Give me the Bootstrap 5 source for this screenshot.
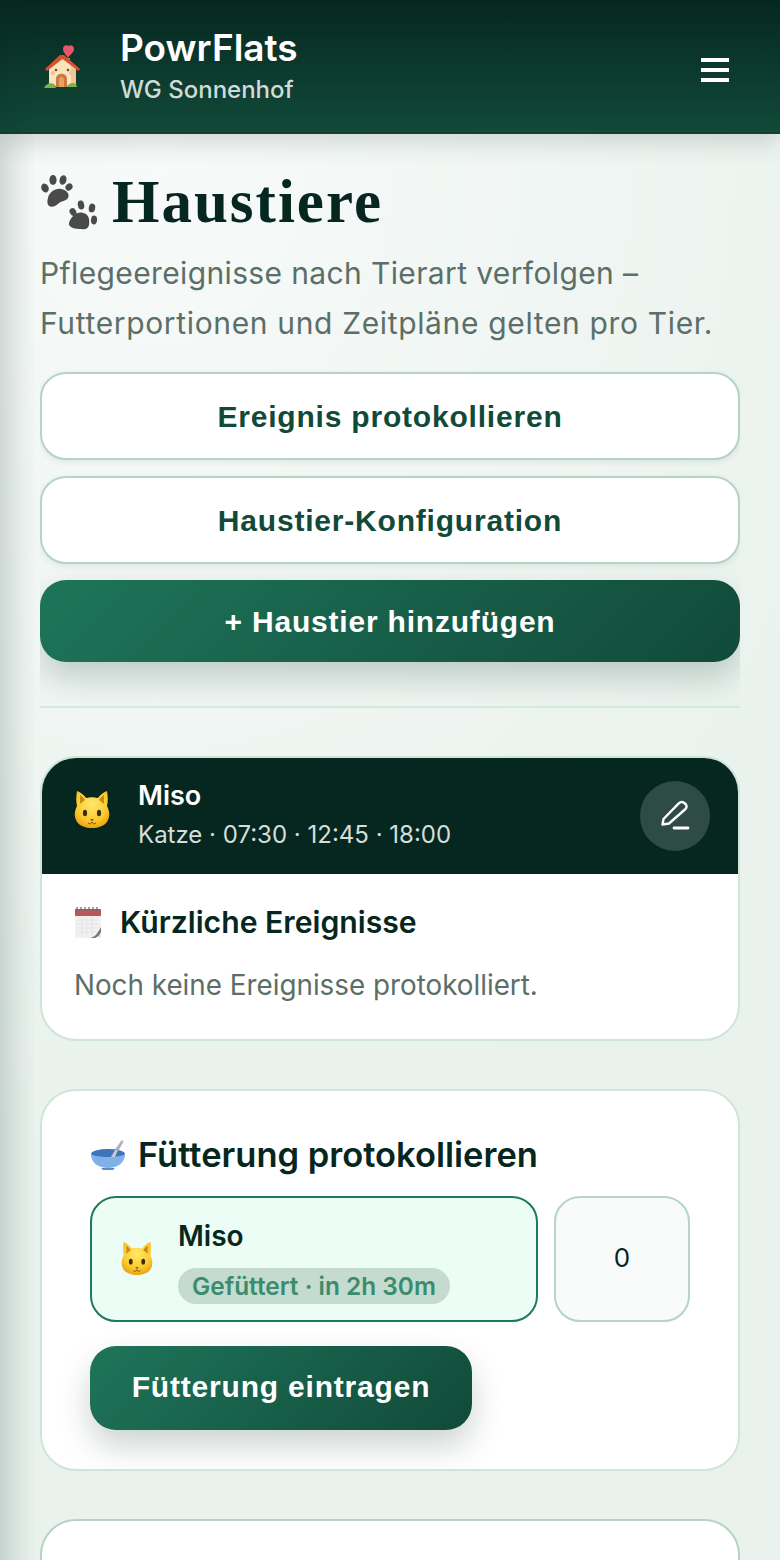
<!DOCTYPE html>
<html lang="de">
<head>
  <meta charset="UTF-8">
  <title>Haustiere</title>
  <link href="https://cdn.jsdelivr.net/npm/bootstrap@5.3.0/dist/css/bootstrap.min.css" rel="stylesheet">
  <style>
    html, body { height: 1560px; overflow: hidden; }
    body {
      font-family: "Inter", "Noto Sans", sans-serif;
      color: #062720;
      background: radial-gradient(ellipse 800px 1000px at 20% 10%, #f7faf9, #e9f2ed);
    }
    .edge-shade {
      position: fixed; top: 0; left: 0; width: 36px; height: 1560px; pointer-events: none;
      background: linear-gradient(90deg, rgba(6,39,32,.15), rgba(6,39,32,.05) 55%, rgba(6,39,32,0));
    }
    .app-head {
      height: 134px; padding: 0 51px 0 44px;
      background: linear-gradient(180deg, #062720, #114a39);
      border-bottom: 2px solid #1d3a33;
      box-shadow: 0 8px 24px rgba(6,39,32,.16);
      position: relative;
    }
    .brand-icon { width: 37px; height: 46px; margin-right: 39px; margin-top: 2px; }
    .brand-name { font-size: 37px; font-weight: 600; line-height: 44px; color: #fff; }
    .brand-sub { font-size: 24px; font-weight: 500; line-height: 32px; margin-top: 4px; color: rgba(255,255,255,.82); }
    .burger { width: 28px; margin-top: 8px; }
    .burger span { display: block; height: 4px; background: #fff; margin-bottom: 6px; }
    .burger span:last-child { margin-bottom: 0; }
    .page-wrap { padding: 0 40px; }
    .page-title {
      font-family: "Liberation Serif", serif; font-weight: 700; font-size: 61px; line-height: 70px;
      letter-spacing: 2px; color: #062720; margin: 33px 0 0;
    }
    .paw-icon { margin-right: 12px; }
    .page-lead { font-size: 30px; letter-spacing: .37px; line-height: 50px; color: #5b6f68; margin: 11px 0 0; }
    .lead-second { letter-spacing: .65px; }
    .action-box { overflow: hidden; padding: 24px 0 44px; }
    .btn-soft, .btn-fill {
      font-family: "Liberation Sans", sans-serif; font-weight: 700; font-size: 30px; letter-spacing: .8px;
      border-radius: 26px;
    }
    .btn-soft {
      height: 88px; background: #fff; color: #114a39; border: 2px solid #b5d4c6;
      box-shadow: 0 2px 6px rgba(6,39,32,.08);
    }
    .btn-fill {
      background: linear-gradient(135deg, #1e7559, #114a39); color: #fff; border: 0;
      box-shadow: 0 16px 32px rgba(6,39,32,.2);
    }
    .btn-fill:hover { color: #fff; }
    .btn-tall { height: 82px; }
    .btn-entry { height: 84px; width: 382px; padding-bottom: 9px; }
    .rule-line { height: 2px; background: #d3e8de; }
    .pet-card { border: 2px solid #cfe5da; border-radius: 36px; overflow: hidden; background: #fff; }
    .pet-head { background: #062720; height: 116px; padding: 0 28px 0 32px; border-radius: 0; border: 0; }
    .pet-emoji { width: 36px; height: 40px; margin: -12px 28px 0 0; }
    .pet-name { font-size: 27px; font-weight: 600; line-height: 36px; color: #fff; }
    .pet-times { font-size: 24px; line-height: 38px; margin-top: 2px; color: #d5dedb; }
    .edit-round {
      width: 70px; height: 70px; border-radius: 50%; border: 0; padding: 0;
      background: rgba(255,255,255,.17);
    }
    .events-body { padding: 30px 32px 0; height: 165px; }
    .events-title { font-size: 30.2px; font-weight: 600; line-height: 36px; margin: 0; }
    .cal-icon { width: 28px; height: 32px; margin-right: 18px; }
    .events-note { font-size: 27.8px; line-height: 36px; color: #5b6f68; margin: 27px 0 0; }
    .feed-card { margin-top: 48px; height: 382px; padding: 42px 48px 0; }
    .feed-title { font-size: 34.5px; font-weight: 600; line-height: 44px; margin: 0 0 19px; }
    .bowl-icon { width: 36px; height: 32px; margin-right: 12px; }
    .feed-pet {
      height: 126px; width: 448px; border: 2px solid #1f7a5c; border-radius: 26px; background: #ecfdf6;
      padding: 0 28px;
    }
    .feed-emoji { width: 32px; height: 36px; margin: 0 25px 0 1px; }
    .feed-info { margin-top: 6px; }
    .feed-name { font-size: 28px; font-weight: 600; line-height: 36px; margin-top: -2px; }
    .feed-tag {
      background: #c5dbd0; color: #3a8c6e; font-size: 24.4px; font-weight: 600; line-height: 36px;
      border-radius: 18px; padding: 0 14px; margin-top: 14px; display: inline-block;
    }
    .feed-count.form-control {
      width: 136px; height: 126px; border: 2px solid #b5d4c6; border-radius: 26px; background: #f9fbfa;
      font-size: 26px; text-align: center; color: #062720; box-shadow: none; padding-bottom: 10px;
    }
    .next-card { margin-top: 48px; height: 200px; border-color: #b5d4c6; }
  </style>
</head>
<body>
  <header class="app-head d-flex align-items-center">
    <svg class="brand-icon" viewBox="0 0 37 46" aria-hidden="true">
      <path d="M25 2c-3-2-6 0-6 3 0 4 4 6 5 9 1-3 6-5 6-9 0-3-3-5-5-3z" fill="#e9566a"/>
      <rect x="22" y="14" width="4" height="9" fill="#c9794f"/>
      <path d="M5 24 18 12l13 12v18H5z" fill="#fbe3bd"/>
      <path d="M27 20l5 4v18h-5z" fill="#f0c78e"/>
      <path d="M1 25 16 11h4l16 14-1.500 2-16-12L3 27z" fill="#d9502f"/>
      <path d="M12 43V35c0-7 11-7 11 0v8z" fill="#c97a3e"/>
      <path d="M15 43v-7c0-4 5-4 5 0v7z" fill="#e6a35c"/>
      <circle cx="12" cy="26" r="1.300" fill="#6b4b3a"/><circle cx="24" cy="26" r="1.300" fill="#6b4b3a"/>
      <circle cx="9" cy="29" r="2" fill="#f5b7a8"/><circle cx="27" cy="29" r="2" fill="#f5b7a8"/>
      <path d="M0 44c2-5 8-6 11-3l1 3z" fill="#7fb04a"/><path d="M22 43c3-4 7-5 10-3l1 3z" fill="#7fb04a"/>
    </svg>
    <div class="flex-grow-1">
      <div class="brand-name">PowrFlats</div>
      <div class="brand-sub">WG Sonnenhof</div>
    </div>
    <div class="burger"><span></span><span></span><span></span></div>
  </header>

  <main class="page-wrap">
    <h1 class="page-title d-flex align-items-center">
      <svg width="60" height="56" viewBox="0 0 60 56" class="paw-icon flex-shrink-0" fill="#4a4a4a" aria-hidden="true">
        <g>
          <ellipse cx="5" cy="14" rx="3.600" ry="4.600" transform="rotate(-25 5 14)"/>
          <ellipse cx="13" cy="6" rx="3.600" ry="5"/>
          <ellipse cx="23" cy="6" rx="3.400" ry="4.800" transform="rotate(15 23 6)"/>
          <ellipse cx="29" cy="13" rx="3.200" ry="3.800" transform="rotate(50 29 13)"/>
          <path d="M8 24c1-6 8-10 13-9 6 1 9 5 7 9-2 3-6 3-9 5-3 3-7 5-10 3-2-2-2-5-1-8z"/>
        </g>
        <g transform="translate(27 25)">
          <ellipse cx="6" cy="13" rx="3.200" ry="4" transform="rotate(-30 6 13)"/>
          <ellipse cx="14" cy="6" rx="3.200" ry="4.600" transform="rotate(-10 14 6)"/>
          <ellipse cx="25" cy="9" rx="3.200" ry="4.400" transform="rotate(10 25 9)"/>
          <ellipse cx="27" cy="21" rx="3" ry="4.400" transform="rotate(5 27 21)"/>
          <path d="M2 24c2-7 9-12 14-10 6 1 7 7 6 12-1 4-4 5-8 4-5 0-13-1-12-6z"/>
        </g>
      </svg>
      Haustiere
    </h1>
    <p class="page-lead">Pflegeereignisse nach Tierart verfolgen – <span class="lead-second">Futterportionen und Zeitpläne gelten pro Tier.</span></p>

    <div class="action-box d-flex flex-column gap-3">
      <button class="btn btn-soft w-100">Ereignis protokollieren</button>
      <button class="btn btn-soft w-100">Haustier-Konfiguration</button>
      <button class="btn btn-fill btn-tall w-100">+ Haustier hinzufügen</button>
    </div>
    <div class="rule-line mb-5"></div>

    <section class="card pet-card">
      <div class="card-header pet-head d-flex align-items-center">
        <svg class="pet-emoji" viewBox="0 0 36 40" aria-hidden="true">
          <defs><radialGradient id="catfill" cx="50%" cy="35%" r="70%"><stop offset="0" stop-color="#ffe96b"/><stop offset=".65" stop-color="#fbc92d"/><stop offset="1" stop-color="#e99a10"/></radialGradient></defs>
          <path d="M3 1c3 1 7 4 9 7 4-1 8-1 12 0 2-3 6-6 9-7 1 5 1 11 0 15 3 6 3 11 0 16-3 4-9 6-15 6S6 36 3 32c-3-5-3-10 0-16C2 12 2 6 3 1z" fill="url(#catfill)"/>
          <path d="M6 5c2 1 4 3 5 5l-5 4zM30 5c-2 1-4 3-5 5l5 4z" fill="#c98a12"/>
          <ellipse cx="11" cy="23" rx="2.100" ry="3.200" fill="#3a2a14"/><ellipse cx="25" cy="23" rx="2.100" ry="3.200" fill="#3a2a14"/>
          <path d="M16 29h4l-2 2.400z" fill="#7a5a50"/>
          <path d="M14 33c2 1.500 3 1 4-1 1 2 2 2.500 4 1" fill="none" stroke="#7a4a14" stroke-width="1"/>
        </svg>
        <div class="flex-grow-1">
          <div class="pet-name">Miso</div>
          <div class="pet-times">Katze · 07:30 · 12:45 · 18:00</div>
        </div>
        <button class="edit-round d-flex align-items-center justify-content-center" aria-label="Bearbeiten">
          <svg width="32" height="32" viewBox="0 0 32 32" fill="none" stroke="#fff" stroke-width="2.400" stroke-linecap="round" stroke-linejoin="round">
            <path d="M3.500 24.500l1-5.500L20 3.200c1.500-1.500 4-1.500 6 .3s2 4 .5 5.500L10 23.500z"/>
            <path d="M15 28h14" stroke-width="2.800"/>
          </svg>
        </button>
      </div>
      <div class="card-body events-body">
        <div class="d-flex align-items-center">
          <svg class="cal-icon" viewBox="0 0 28 32" aria-hidden="true">
            <path d="M1 3h26v29H1z" fill="#f1f1f1"/>
            <path d="M1 3h26v7H1z" fill="#b9575c"/>
            <path d="M3 1v4M7 1v4M11 1v4M15 1v4M19 1v4M23 1v4" stroke="#666" stroke-width="1.200"/>
            <path d="M3 14h22M3 18h22M3 22h22M3 26h22M8 11v20M13 11v20M18 11v20" stroke="#e0e0e0" stroke-width=".7"/>
            <path d="M27 21v8l-3 3h-8c5-1 8-5 11-11z" fill="#777"/>
            <path d="M27 26v3l-3 3h-3c3-1 5-3 6-6z" fill="#fff"/>
          </svg>
          <h2 class="events-title">Kürzliche Ereignisse</h2>
        </div>
        <p class="events-note">Noch keine Ereignisse protokolliert.</p>
      </div>
    </section>

    <section class="card pet-card feed-card">
      <h2 class="feed-title d-flex align-items-center">
        <svg class="bowl-icon" viewBox="0 0 36 32" aria-hidden="true">
          <path d="M21 16 31 2c1-1.500 3-.5 2.400 1L26 16z" fill="#b3b3bd"/>
          <ellipse cx="18" cy="15" rx="17" ry="5" fill="#3f75b8"/>
          <path d="M1 15c0 9 8 14 17 14s17-5 17-14c-5 4-29 4-34 0z" fill="#7fb0ea"/>
          <path d="M21 18 25 11h3l-3 7z" fill="#c9c9d2"/>
          <path d="M11 29h14l-2 2H13z" fill="#5b8ccb"/>
        </svg>
        Fütterung protokollieren
      </h2>
      <div class="d-flex gap-3">
        <div class="feed-pet d-flex align-items-center">
          <svg class="feed-emoji" viewBox="0 0 36 40" aria-hidden="true">
            <path d="M3 1c3 1 7 4 9 7 4-1 8-1 12 0 2-3 6-6 9-7 1 5 1 11 0 15 3 6 3 11 0 16-3 4-9 6-15 6S6 36 3 32c-3-5-3-10 0-16C2 12 2 6 3 1z" fill="url(#catfill)"/>
            <path d="M6 5c2 1 4 3 5 5l-5 4zM30 5c-2 1-4 3-5 5l5 4z" fill="#c98a12"/>
            <ellipse cx="11" cy="23" rx="2.100" ry="3.200" fill="#3a2a14"/><ellipse cx="25" cy="23" rx="2.100" ry="3.200" fill="#3a2a14"/>
            <path d="M16 29h4l-2 2.400z" fill="#7a5a50"/>
            <path d="M14 33c2 1.500 3 1 4-1 1 2 2 2.500 4 1" fill="none" stroke="#7a4a14" stroke-width="1"/>
          </svg>
          <div class="feed-info">
            <div class="feed-name">Miso</div>
            <span class="feed-tag">Gefüttert · in 2h 30m</span>
          </div>
        </div>
        <input class="form-control feed-count" type="text" value="0" aria-label="Portionen">
      </div>
      <button class="btn btn-fill btn-entry mt-4">Fütterung eintragen</button>
    </section>

    <section class="card pet-card next-card"></section>
  </main>
  <div class="edge-shade"></div>
</body>
</html>
